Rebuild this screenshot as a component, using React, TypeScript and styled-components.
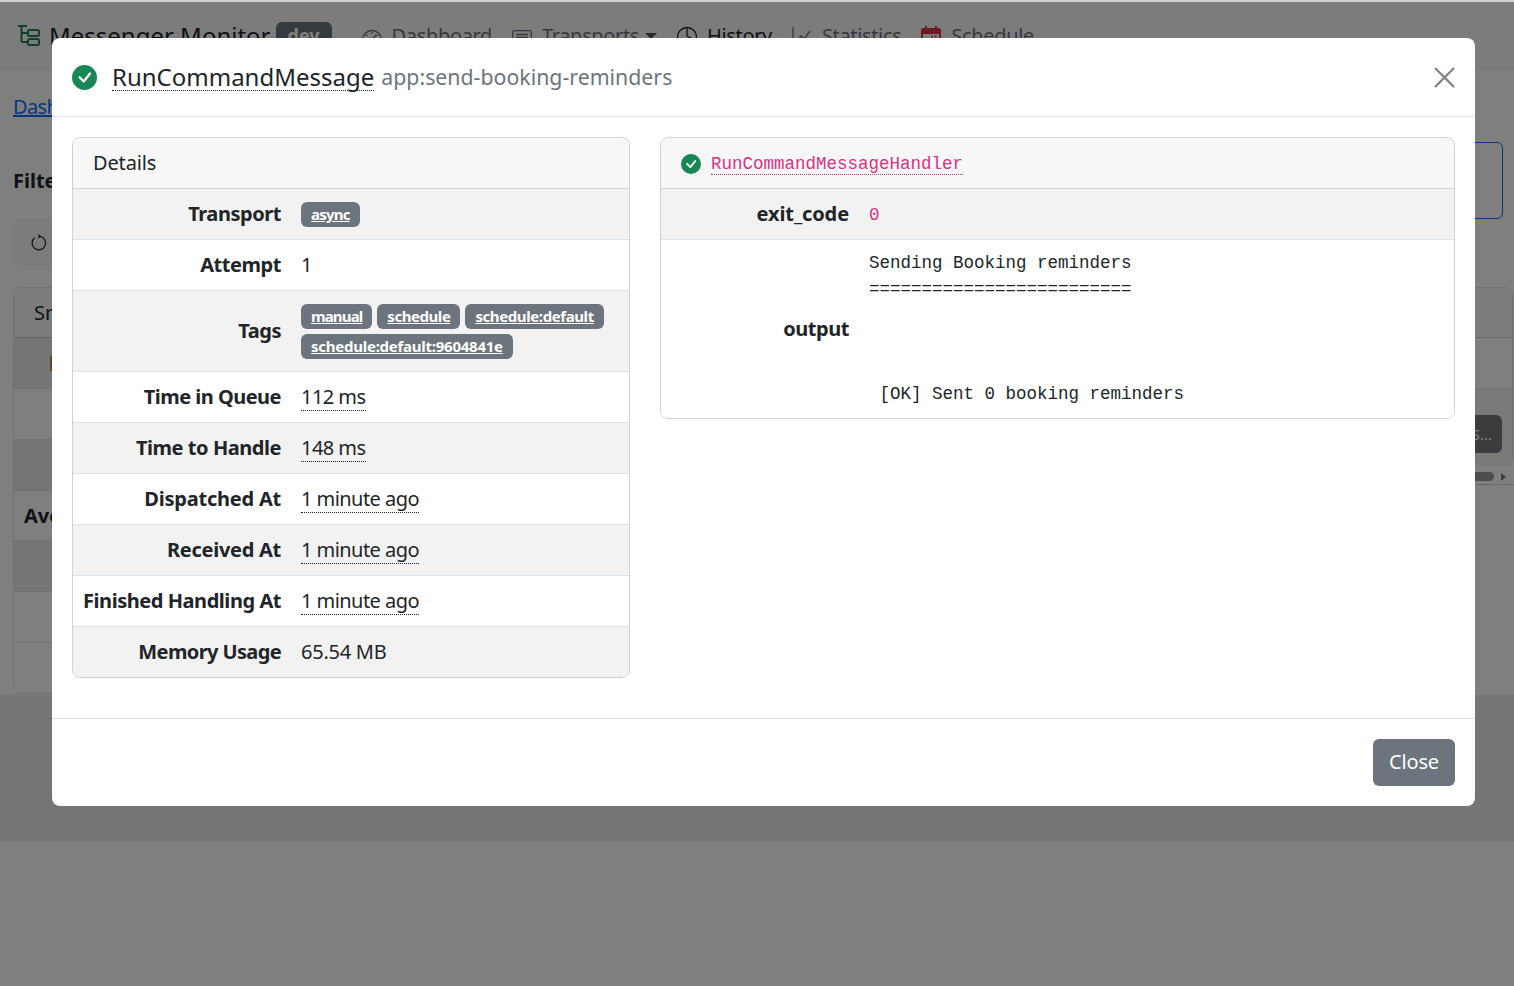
import React from "react";
import styled, { createGlobalStyle } from "styled-components";

const SANS = `"Noto Sans", "Open Sans", sans-serif`;
const MONO = `"Liberation Mono", monospace`;

const Global = createGlobalStyle`
  html, body { margin: 0; padding: 0; background: #cfcfcf; }
  body { font-family: ${SANS}; font-size: 20px; line-height: 30px; color: #212529; overflow: hidden; height: 986px; }
  * { box-sizing: border-box; }
`;

const Page = styled.div`
  height: 986px;
  overflow: hidden;
  padding-top: 2px;
`;
const Nav = styled.nav`
  height: 68px;
  background: #f8f9fa;
  display: flex;
  align-items: center;
  padding-left: 17px;
`;
const Brand = styled.div`
  display: flex;
  align-items: center;
  gap: 8px;
  font-size: 24px;
  color: #212529;
  margin-right: 30px;
`;
const DevBadge = styled.span`
  background: #6c757d;
  color: #fff;
  font-size: 18px;
  font-weight: 700;
  border-radius: 6px;
  padding: 0 12px;
  height: 26px;
  line-height: 26px;
  margin: -2px 0 0 -3px;
`;
const NavItem = styled.span<{ $active?: boolean }>`
  display: inline-flex;
  align-items: center;
  gap: 10px;
  font-size: 20px;
  letter-spacing: -0.35px;
  margin-right: 20px;
  color: ${(p) => (p.$active ? "#212529" : "#6d7276")};
`;
const Caret = styled.i`
  width: 0;
  height: 0;
  margin-left: -4px;
  border-left: 6px solid transparent;
  border-right: 6px solid transparent;
  border-top: 6px solid #555;
`;
const Main = styled.main`
  height: 625px;
  padding: 22px 1px 0 13px;
  background: #fff;
`;
const Crumb = styled.a`
  display: block;
  color: #0d6efd;
  text-decoration: underline;
  letter-spacing: -0.6px;
`;
const FilterHead = styled.div`
  margin-top: 20px;
  height: 77px;
  display: flex;
  align-items: center;
  justify-content: space-between;
  padding-right: 10px;
`;
const FilterTitle = styled.strong`
  font-size: 20px;
`;
const OutlineBox = styled.div`
  width: 300px;
  height: 77px;
  border: 1.5px solid #0d6efd;
  border-radius: 6px;
`;
const Toolbar = styled.div`
  width: 200px;
  height: 47px;
  background: #f8f9fa;
  border-radius: 6px;
  display: flex;
  align-items: center;
  padding-left: 17px;
`;
const BgTop = styled.div`
  margin-top: 21px;
  height: 203px;
  display: flex;
`;
const BgLeftCol = styled.div`
  width: 600px;
  border: 1px solid #dee2e6;
  border-width: 1px 0 0 1px;
  border-top-left-radius: 8px;
`;
const BgRightCol = styled.div`
  flex: 1;
`;
const BgRightBox = styled.div`
  height: 179px;
  border: 1px solid #dee2e6;
  border-left: 0;
  border-radius: 0 8px 8px 0;
`;
const BgHead = styled.div`
  height: 50px;
  padding: 10px 20px;
  background: #f8f9fa;
  border-bottom: 1px solid #ccc;
`;
const BgRow = styled.div<{ $shade?: boolean }>`
  height: 51px;
  padding: 18px 36px;
  background: ${(p) => (p.$shade ? "#ebebeb" : "#fff")};
  border-bottom: 1px solid #dee2e6;
`;
const BgMark = styled.i`
  display: block;
  width: 3px;
  height: 15px;
  background: #c98a3a;
`;
const BgTallRow = styled.div`
  height: 77px;
  background: #f2f2f2;
  display: flex;
  justify-content: flex-end;
  align-items: flex-start;
  padding: 26px 10px 0 0;
`;
const BgDarkBtn = styled.span`
  width: 200px;
  height: 38px;
  border-radius: 6px;
  background: #75797d;
  color: #fff;
  font-size: 15px;
  line-height: 30px;
  text-align: right;
  padding: 4px 10px;
`;
const BgScrollLine = styled.div`
  margin-top: 6px;
  height: 13px;
  border-bottom: 1px solid #ccc;
  display: flex;
  justify-content: flex-end;
  align-items: flex-start;
  gap: 7px;
  padding-right: 7px;
`;
const BgThumb = styled.i`
  width: 140px;
  height: 9px;
  border-radius: 5px;
  background: #9a9a9a;
`;
const BgArrow = styled.i`
  margin-top: 1px;
  width: 0;
  border-left: 5px solid #777;
  border-top: 4px solid transparent;
  border-bottom: 4px solid transparent;
`;
const BgCard2 = styled.div`
  width: 600px;
  height: 204px;
  border: 1px solid #dee2e6;
  border-top: 0;
  border-radius: 0 0 8px 8px;
`;
const BgHead2 = styled.div`
  height: 51px;
  padding: 11px 10px;
  font-weight: 700;
  border-bottom: 1px solid #dee2e6;
`;
const Foot = styled.footer`
  height: 146px;
  background: #e9ebec;
`;
const Rest = styled.div`
  height: 200px;
  background: #fff;
`;

const Backdrop = styled.div`
  position: fixed;
  inset: 2px 0 0 0;
  background: rgba(0, 0, 0, 0.5);
  padding: 36px 39px 0 52px;
`;
const Modal = styled.div`
  width: 1423px;
  height: 768px;
  background: #fff;
  border-radius: 8px;
  display: flex;
  flex-direction: column;
`;
const ModalHead = styled.header`
  height: 79px;
  flex: none;
  border-bottom: 1px solid #dee2e6;
  display: flex;
  align-items: center;
  padding: 0 20px;
`;
const TitleMain = styled.span`
  font-size: 24px;
  line-height: 27px;
  margin-left: 15px;
  color: #212529;
  border-bottom: 1px dotted #212529;
`;
const TitleSub = styled.span`
  font-size: 21.3px;
  margin-left: 7px;
  color: #6c757d;
`;
const CloseX = styled.button`
  margin-left: auto;
  width: 21px;
  height: 21px;
  padding: 0;
  border: 0;
  background: none;
  display: flex;
`;
const ModalBody = styled.div`
  flex: 1;
  padding: 20px;
  display: grid;
  grid-template-columns: 558px 795px;
  gap: 30px;
  align-items: start;
`;
const Card = styled.section`
  border: 1px solid #d1d1d1;
  border-radius: 8px;
  overflow: hidden;
`;
const CardHead = styled.div`
  height: 51px;
  background: #f7f7f7;
  border-bottom: 1px solid #d1d1d1;
  padding: 10px 20px;
  display: flex;
  align-items: center;
  gap: 10px;
  letter-spacing: -0.15px;
`;
const HandlerIcon = styled.span`
  display: flex;
  margin-top: 2px;
`;
const Row = styled.div<{ $shade?: boolean; $th: number; $last?: boolean }>`
  display: grid;
  grid-template-columns: ${(p) => p.$th}px 1fr;
  background: ${(p) => (p.$shade ? "#f2f2f2" : "#fff")};
  border-bottom: ${(p) => (p.$last ? "0" : "1px solid #dee2e6")};
  align-items: center;
`;
const Th = styled.div<{ $ls?: number }>`
  font-weight: 700;
  text-align: right;
  padding: 10px;
  line-height: 30px;
  letter-spacing: ${(p) => p.$ls ?? -0.45}px;
  white-space: nowrap;
`;
const Td = styled.div`
  padding: 10px;
  min-width: 0;
  letter-spacing: -0.25px;
`;
const Abbr = styled.span`
  border-bottom: 1px dotted #212529;
  letter-spacing: -0.55px;
`;
const Tags = styled.div`
  display: flex;
  flex-wrap: wrap;
  gap: 5px;
  padding: 3px 0 2px;
`;
const Badge = styled.a<{ $ls: number }>`
  background: #6c757d;
  color: #fff;
  font-size: 15px;
  font-weight: 700;
  line-height: 25px;
  height: 25px;
  border-radius: 6px;
  padding: 0 10px;
  text-decoration: underline;
  letter-spacing: ${(p) => p.$ls}px;
`;
const CodeLink = styled.code`
  font-family: ${MONO};
  font-size: 17.5px;
  letter-spacing: 0;
  color: #d63384;
  border-bottom: 1px dotted #d63384;
  line-height: 19px;
  margin-top: 4px;
`;
const Code = styled.code`
  display: block;
  font-family: ${MONO};
  font-size: 17.5px;
  line-height: 28px;
  padding-top: 2px;
  letter-spacing: 0;
  color: #d63384;
`;
const Pre = styled.pre`
  margin: 0;
  font-family: ${MONO};
  font-size: 17.5px;
  line-height: 26.25px;
  letter-spacing: 0;
  color: #212529;
`;
const ModalFoot = styled.footer`
  height: 88px;
  flex: none;
  border-top: 1px solid #dee2e6;
  display: flex;
  justify-content: flex-end;
  align-items: center;
  padding: 0 20px;
`;
const CloseBtn = styled.button`
  width: 82px;
  height: 47px;
  border: 0;
  border-radius: 6px;
  padding: 0 0 2px;
  background: #6c757d;
  color: #fff;
  font-family: ${SANS};
  font-size: 20px;
  letter-spacing: -0.2px;
`;

const Check = ({ size }: { size: number }) => (
  <svg width={size} height={size} viewBox="0 0 16 16" fill="#198754" style={{ flex: "none" }}>
    <path d="M16 8A8 8 0 1 1 0 8a8 8 0 0 1 16 0m-3.97-3.03a.75.75 0 0 0-1.08.022L7.477 9.417 5.384 7.323a.75.75 0 0 0-1.06 1.06L6.97 11.03a.75.75 0 0 0 1.079-.02l3.992-4.99a.75.75 0 0 0-.01-1.05z" />
  </svg>
);

const Ic = ({ c = "#6d7276", children }: { c?: string; children: React.ReactNode }) => (
  <svg width="20" height="20" viewBox="0 0 20 20" fill="none" stroke={c} strokeWidth="1.3" style={{ flex: "none" }}>
    {children}
  </svg>
);

const details: [string, string, number][] = [
  ["Time in Queue", "112 ms", -0.53],
  ["Time to Handle", "148 ms", -0.45],
  ["Dispatched At", "1 minute ago", -0.22],
  ["Received At", "1 minute ago", -0.27],
  ["Finished Handling At", "1 minute ago", -0.45],
];

export default function App() {
  return (
    <>
      <Global />
      <Page>
        <Nav>
          <Brand>
            <svg width="24" height="24" viewBox="0 0 24 24" fill="none" stroke="#198754" strokeWidth="2">
              <path d="M1 2h9M4.5 2v16M4.5 9h6M4.5 18h6" />
              <rect x="11" y="6" width="11" height="6" rx="1.5" />
              <rect x="11" y="15" width="11" height="6" rx="1.5" />
            </svg>
            Messenger Monitor
            <DevBadge>dev</DevBadge>
          </Brand>
          <NavItem>
            <Ic><circle cx="10" cy="14" r="9.5" /><path d="M10 14l4-5M4 9l1.5 1M10 6v2M15.5 9l-1 1" /></Ic>Dashboard
          </NavItem>
          <NavItem>
            <Ic><rect x="0.7" y="4.7" width="18.6" height="14" rx="1.5" /><path d="M4 8.5h12M4 11.5h12M4 14.5h12" /></Ic>Transports<Caret />
          </NavItem>
          <NavItem $active>
            <Ic c="#212529"><circle cx="10" cy="11" r="9.5" /><path d="M10 1v9l4 2" /></Ic>History
          </NavItem>
          <NavItem>
            <Ic><path d="M1 1v18h18M5 15l4-5 3 3 6-8" /></Ic>Statistics
          </NavItem>
          <NavItem>
            <svg width="20" height="20" viewBox="0 0 20 20" fill="#dc3545">
              <path d="M4 0h2v2h8V0h2v2h2a2 2 0 0 1 2 2v14a2 2 0 0 1-2 2H2a2 2 0 0 1-2-2V4a2 2 0 0 1 2-2h2zM2 8v10h16V8zM10 9.5h2v2h-2zM13.5 9.5h2v2h-2z" fillRule="evenodd" />
            </svg>
            Schedule
          </NavItem>
        </Nav>
        <Main>
          <Crumb>Dashboard</Crumb>
          <FilterHead>
            <FilterTitle>Filters</FilterTitle>
            <OutlineBox />
          </FilterHead>
          <Toolbar>
            <svg width="18" height="18" viewBox="0 0 16 16" fill="none" stroke="#212529" strokeWidth="1.1">
              <path d="M9 2.2A6 6 0 1 1 4.2 3.3" />
              <path d="M7.5 0v4.2L10 2z" fill="#212529" stroke="none" />
            </svg>
          </Toolbar>
          <BgTop>
            <BgLeftCol>
              <BgHead>Snapshot</BgHead>
              <BgRow $shade><BgMark /></BgRow>
              <BgRow />
              <BgRow $shade />
            </BgLeftCol>
            <BgRightCol>
              <BgRightBox>
                <BgHead />
                <BgRow />
                <BgTallRow><BgDarkBtn>S...</BgDarkBtn></BgTallRow>
              </BgRightBox>
              <BgScrollLine><BgThumb /><BgArrow /></BgScrollLine>
            </BgRightCol>
          </BgTop>
          <BgCard2>
            <BgHead2>Average</BgHead2>
            <BgRow $shade />
            <BgRow />
            <BgRow />
          </BgCard2>
        </Main>
        <Foot />
        <Rest />
      </Page>
      <Backdrop>
        <Modal>
          <ModalHead>
            <Check size={25} />
            <TitleMain>RunCommandMessage</TitleMain>
            <TitleSub>app:send-booking-reminders</TitleSub>
            <CloseX aria-label="Close">
              <svg width="21" height="21" viewBox="0 0 21 21" stroke="#808080" strokeWidth="2.2" fill="none">
                <path d="M1 1l19 19M20 1L1 20" />
              </svg>
            </CloseX>
          </ModalHead>
          <ModalBody>
            <Card>
              <CardHead>Details</CardHead>
              <Row $th={218} $shade>
                <Th>Transport</Th>
                <Td><Tags><Badge $ls={-0.8}>async</Badge></Tags></Td>
              </Row>
              <Row $th={218}>
                <Th>Attempt</Th>
                <Td>1</Td>
              </Row>
              <Row $th={218} $shade>
                <Th>Tags</Th>
                <Td>
                  <Tags>
                    <Badge $ls={-0.87}>manual</Badge>
                    <Badge $ls={-0.45}>schedule</Badge>
                    <Badge $ls={-0.4}>schedule:default</Badge>
                    <Badge $ls={-0.25}>schedule:default:9604841e</Badge>
                  </Tags>
                </Td>
              </Row>
              {details.map(([k, v, ls], i) => (
                <Row $th={218} $shade={i % 2 === 1} key={k}>
                  <Th $ls={ls}>{k}</Th>
                  <Td><Abbr>{v}</Abbr></Td>
                </Row>
              ))}
              <Row $th={218} $shade $last>
                <Th $ls={-0.62}>Memory Usage</Th>
                <Td>65.54 MB</Td>
              </Row>
            </Card>
            <Card>
              <CardHead>
                <HandlerIcon><Check size={20} /></HandlerIcon>
                <CodeLink>RunCommandMessageHandler</CodeLink>
              </CardHead>
              <Row $th={198} $shade>
                <Th $ls={-0.1}>exit_code</Th>
                <Td><Code>0</Code></Td>
              </Row>
              <Row $th={198} $last>
                <Th>output</Th>
                <Td>
                  <Pre>{`Sending Booking reminders
=========================



 [OK] Sent 0 booking reminders`}</Pre>
                </Td>
              </Row>
            </Card>
          </ModalBody>
          <ModalFoot>
            <CloseBtn>Close</CloseBtn>
          </ModalFoot>
        </Modal>
      </Backdrop>
    </>
  );
}
